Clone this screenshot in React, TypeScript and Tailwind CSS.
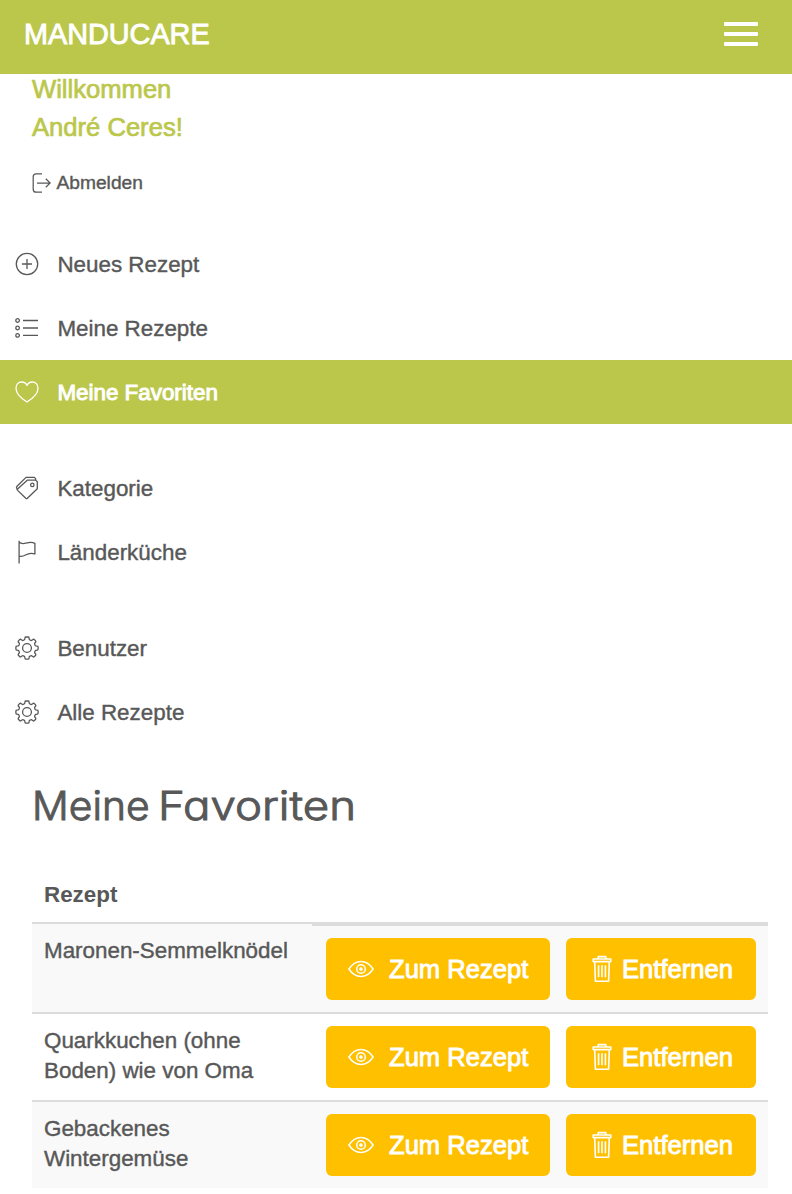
import type { ReactNode } from "react";

type IconName = "plus" | "list" | "heart" | "tag" | "flag" | "gear";

const iconShapes: Record<IconName, ReactNode> = {
  plus: (
    <>
      <circle cx="12" cy="12" r="10.7" />
      <path d="M12 7v10M7 12h10" />
    </>
  ),
  list: (
    <>
      <circle cx="2.6" cy="4.5" r="1.8" />
      <circle cx="2.6" cy="12" r="1.8" />
      <circle cx="2.6" cy="19.4" r="1.8" />
      <path d="M8 4.5h15M8 12h15M8 19.4h15" />
    </>
  ),
  heart: (
    <path d="M12 22C8.5 19.8 1 14.5 1 8.2C1 4.6 3.4 2 6.6 2C9.2 2 11.2 3.4 12 5.4C12.8 3.4 14.8 2 17.4 2C20.6 2 23 4.6 23 8.2C23 14.5 15.5 19.8 12 22Z" />
  ),
  tag: (
    <>
      <path d="M12.5 4.1H20.6L22.3 5.8V12.7L12.4 22.3Q11.6 23 10.8 22.3L2.6 14.4Q1.9 13.6 2.6 12.9Z" />
      <path d="M20.6 4V2.6L19.4 1.4H11L2 10.2Q1.1 11.2 1.8 12.5L2.4 13.4" />
      <circle cx="17.3" cy="8.9" r="1.7" />
    </>
  ),
  flag: (
    <path d="M4.1 .8v22.6M4.1 2.3C7 4.8 10.5 3.2 13.5 2.6C16 2.1 18 2.4 19.9 3.3V14C16 12.6 13.5 13.3 10.5 15C8 16.4 6 16.5 4.1 16.1" />
  ),
  gear: (
    <>
      <circle cx="12" cy="12" r="4.4" />
      <path d="M10.8 1h2.4q.7 0 .8.8l.2 1.4q.1.6.7.8l.9.4q.6.2 1.1-.1l1.2-.9q.6-.4 1.1.1l1.4 1.4q.5.5.1 1.1l-.9 1.2q-.3.5-.1 1.1l.4.9q.2.6.8.7l1.4.2q.8.1.8.8v2.4q0 .7-.8.8l-1.4.2q-.6.1-.8.7l-.4.9q-.2.6.1 1.1l.9 1.2q.4.6-.1 1.1l-1.4 1.4q-.5.5-1.1.1l-1.2-.9q-.5-.3-1.1-.1l-.9.4q-.6.2-.7.8l-.2 1.4q-.1.8-.8.8h-2.4q-.7 0-.8-.8l-.2-1.4q-.1-.6-.7-.8l-.9-.4q-.6-.2-1.1.1l-1.2.9q-.6.4-1.1-.1l-1.4-1.4q-.5-.5-.1-1.1l.9-1.2q.3-.5.1-1.1l-.4-.9q-.2-.6-.8-.7l-1.4-.2q-.8-.1-.8-.8v-2.4q0-.7.8-.8l1.4-.2q.6-.1.8-.7l.4-.9q.2-.6-.1-1.1l-.9-1.2q-.4-.6.1-1.1l1.4-1.4q.5-.5 1.1-.1l1.2.9q.5.3 1.1.1l.9-.4q.6-.2.7-.8l.2-1.4q.1-.8.8-.8z" />
    </>
  ),
};

function NavIcon({ name }: { name: IconName }) {
  return (
    <svg
      viewBox="0 0 24 24"
      className="h-6 w-6 shrink-0"
      fill="none"
      stroke="currentColor"
      strokeWidth="1.3"
      strokeLinejoin="round"
    >
      {iconShapes[name]}
    </svg>
  );
}

function LogoutIcon() {
  return (
    <svg viewBox="0 0 20 20" className="h-5 w-5" fill="none" stroke="currentColor" strokeWidth="1.25">
      <path d="M10 .8H4.2Q1.2.8 1.2 3.8v12.4q0 3 3 3H10M5 10h13M13.8 5.8l4.3 4.2-4.3 4.2" />
    </svg>
  );
}

function EyeIcon() {
  return (
    <svg viewBox="0 0 26 18" className="h-[18px] w-[26px]" fill="none" stroke="currentColor" strokeWidth="1.5">
      <path d="M.9 9C4 4.3 8.2 1.5 13 1.5S22 4.3 25.1 9C22 13.7 17.8 16.5 13 16.5S4 13.7.9 9Z" strokeLinejoin="round" />
      <circle cx="13" cy="9" r="4.3" />
      <circle cx="13" cy="9" r="1.1" fill="currentColor" />
    </svg>
  );
}

function TrashIcon() {
  return (
    <svg viewBox="0 0 20 28" className="h-7 w-5" fill="none" stroke="currentColor" strokeWidth="1.6" strokeLinejoin="round">
      <path d="M6.2 4V1.6h7.6V4M1.2 6.6V4h17.6v2.6zM2.7 6.8 3.4 26.3h13.2L17.3 6.8M6.6 10.3v12M10 10.3v12M13.4 10.3v12" />
    </svg>
  );
}

const navGroups: { icon: IconName; label: string; active?: boolean }[][] = [
  [
    { icon: "plus", label: "Neues Rezept" },
    { icon: "list", label: "Meine Rezepte" },
    { icon: "heart", label: "Meine Favoriten", active: true },
  ],
  [
    { icon: "tag", label: "Kategorie" },
    { icon: "flag", label: "Länderküche" },
  ],
  [
    { icon: "gear", label: "Benutzer" },
    { icon: "gear", label: "Alle Rezepte" },
  ],
];

const recipes = ["Maronen-Semmelknödel", "Quarkkuchen (ohne Boden) wie von Oma", "Gebackenes Wintergemüse"];

const buttonClass =
  "flex h-[62px] items-center rounded-md bg-[#ffc000] text-[25.6px] whitespace-nowrap text-white [-webkit-text-stroke:0.9px_white]";

export default function App() {
  return (
    <div className="min-h-[1194px] bg-white font-['Liberation_Sans',Arial,sans-serif] text-[22.4px] text-[#585858] [-webkit-text-stroke:0.4px_currentColor]">
      <header className="flex h-[74px] items-start justify-between bg-[#bbc74b] pr-[34px] pl-6 text-white">
        <span className="pt-[14px] text-[28.8px] leading-10 [-webkit-text-stroke:0.9px_white]">MANDUCARE</span>
        <button aria-label="Menü" className="mt-[22px] flex w-[34px] flex-col gap-[6px]">
          <span className="h-1 rounded-[1px] bg-white" />
          <span className="h-1 rounded-[1px] bg-white" />
          <span className="h-1 rounded-[1px] bg-white" />
        </button>
      </header>

      <section className="h-[158px] pl-8">
        <p className="-mt-1 text-[25.6px] leading-[38px] text-[#bbc74b] [-webkit-text-stroke:0.7px_currentColor]">
          Willkommen
          <br />
          André Ceres!
        </p>
        <a className="mt-[22px] flex h-[30px] items-center gap-[4.5px] text-[19.2px]">
          <LogoutIcon />
          <span className="pt-px">Abmelden</span>
        </a>
      </section>

      <nav className="mt-1 flex flex-col gap-8">
        {navGroups.map((group, index) => (
          <ul key={index}>
            {group.map((item) => (
              <li
                key={item.label}
                className={
                  item.active
                    ? "flex h-16 items-center gap-[18px] bg-[#bbc74b] pl-[15.4px] text-white"
                    : "flex h-16 items-center gap-[18px] pl-[15.4px]"
                }
              >
                <NavIcon name={item.icon} />
                <span className={item.active ? "pt-0.5 [-webkit-text-stroke:1px_white]" : "pt-0.5"}>{item.label}</span>
              </li>
            ))}
          </ul>
        ))}
      </nav>

      <main className="px-8 pr-6">
        <h1 className="flex w-fit gap-[11px] pt-[34px] font-['Inter',sans-serif] text-[40px] leading-[56px] font-light whitespace-nowrap [font-feature-settings:'cv11'] [-webkit-text-stroke:1px_currentColor]">
          <span className="origin-left scale-x-[1.02]">Meine</span>{" "}
          <span className="origin-left scale-x-[1.14]">Favoriten</span>
        </h1>
        <div className="mt-11 flex h-[44px] items-start px-3 font-bold [-webkit-text-stroke:0px]">
          <span className="leading-[34px]">Rezept</span>
        </div>
        <ul>
          {recipes.map((name, index) => (
            <li
              key={name}
              className={
                index % 2 === 0
                  ? "flex border-t-2 border-[#dcdcdc] bg-[#f9f9f9]"
                  : "flex border-t-2 border-[#dcdcdc] bg-white"
              }
            >
              <div className="w-[280px] px-3 pt-3 leading-[30px]">{name}</div>
              <div
                className={
                  index === 0
                    ? "flex grow gap-4 border-t-2 border-[#dcdcdc] pt-3 pr-3 pb-3 pl-[14px]"
                    : "flex grow gap-4 pt-3 pr-3 pb-3 pl-[14px]"
                }
              >
                <button className={`${buttonClass} w-[224px] gap-[15px] pl-[22px]`}>
                  <EyeIcon />
                  Zum Rezept
                </button>
                <button className={`${buttonClass} w-[190px] gap-[10px] pl-[26px]`}>
                  <TrashIcon />
                  Entfernen
                </button>
              </div>
            </li>
          ))}
        </ul>
      </main>
    </div>
  );
}
